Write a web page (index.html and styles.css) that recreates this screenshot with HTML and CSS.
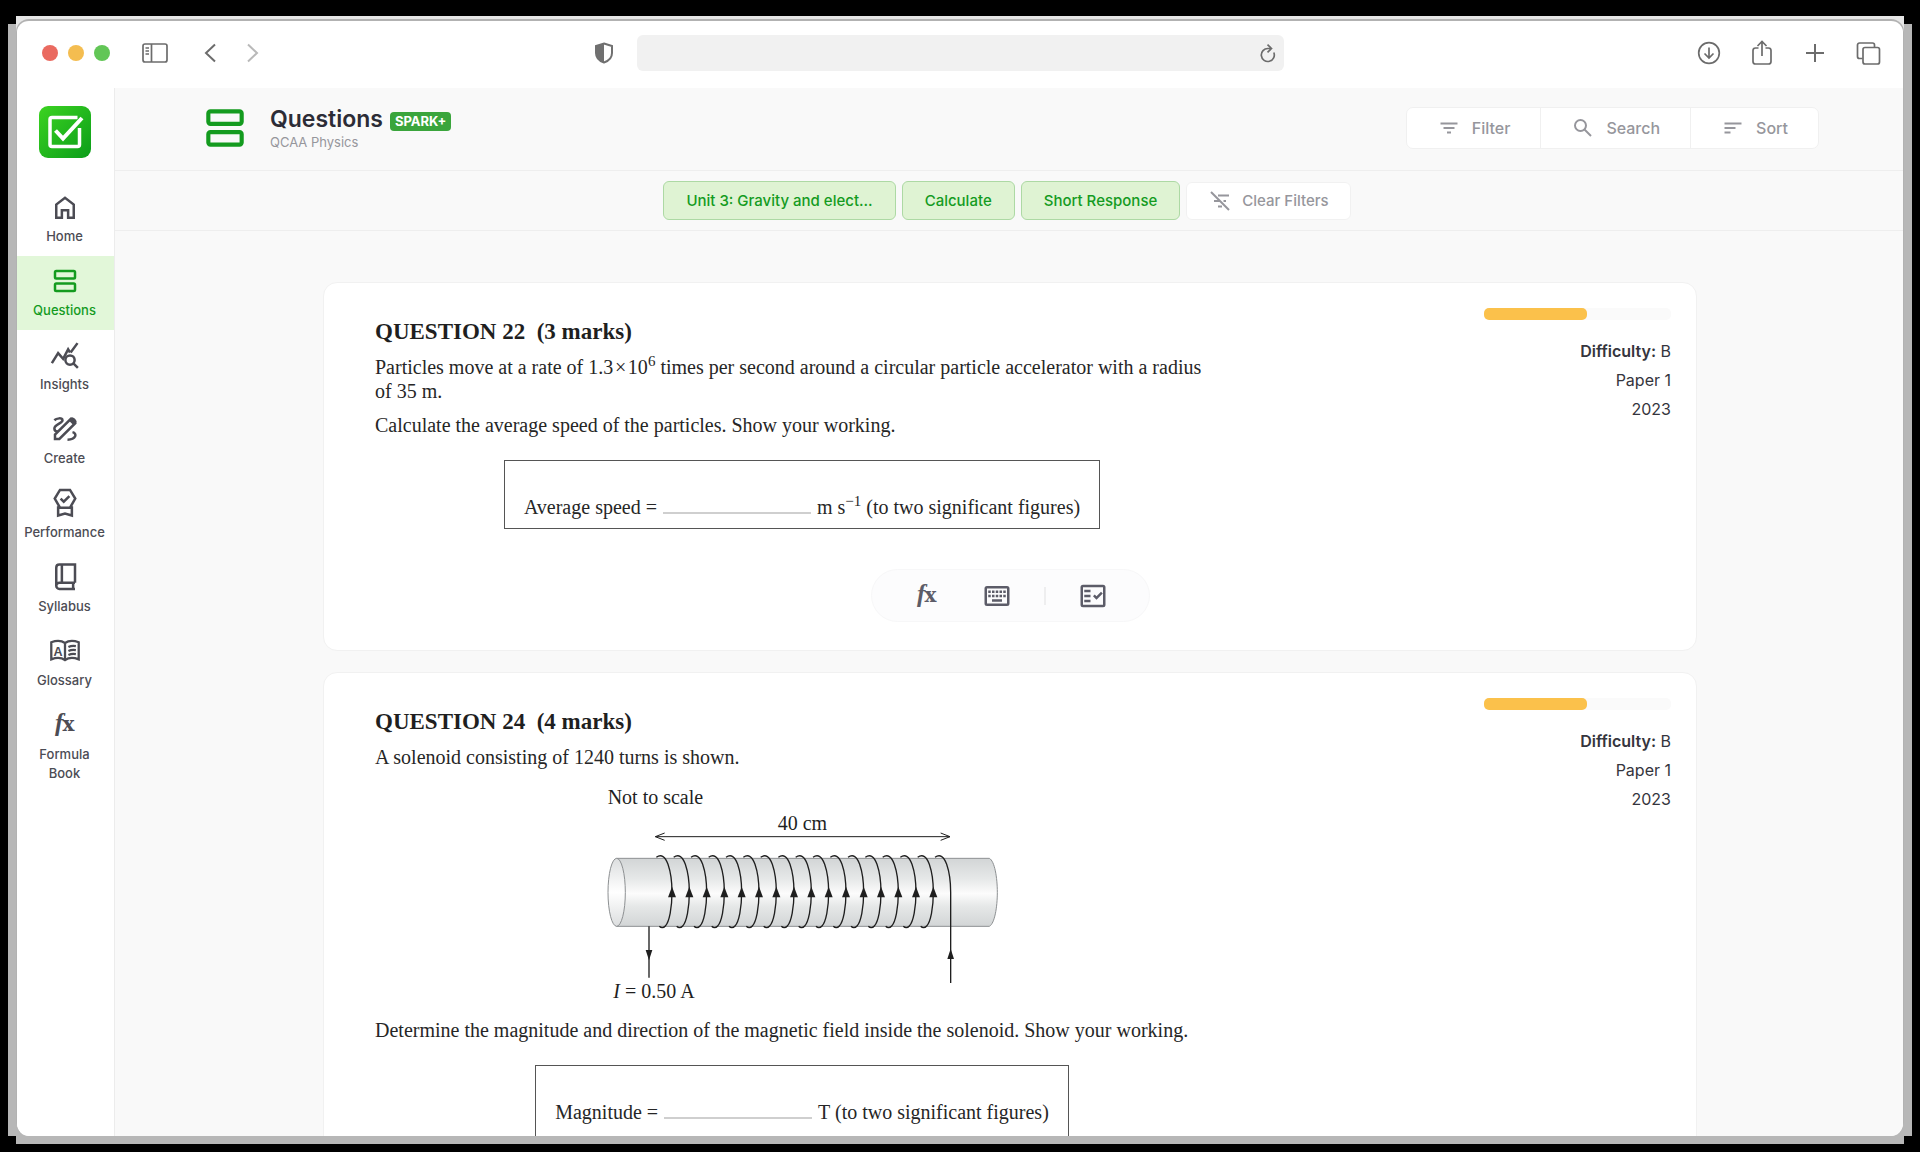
FILE: index.html
```html
<!DOCTYPE html>
<html lang="en">
<head>
<meta charset="utf-8">
<meta name="viewport" content="width=device-width, initial-scale=1">
<title>Questions</title>
<link rel="stylesheet" href="styles.css">
</head>
<body>
<svg class="defs" aria-hidden="true">
  <defs>
    <symbol id="i-rows" viewBox="0 0 24 24"><rect x="4" y="4" width="16" height="6" rx="1" fill="none" stroke="currentColor" stroke-width="2"/><rect x="4" y="14" width="16" height="6" rx="1" fill="none" stroke="currentColor" stroke-width="2"/></symbol>
    <symbol id="i-fx" viewBox="0 0 24 24"><text x="4" y="17" class="fx-f">f</text><text x="10" y="17" class="fx-x">x</text></symbol>
    <symbol id="i-keyboard" viewBox="0 0 24 24"><path fill="currentColor" fill-rule="evenodd" d="M4 4h16a2 2 0 0 1 2 2v12a2 2 0 0 1-2 2H4a2 2 0 0 1-2-2V6a2 2 0 0 1 2-2Zm0 2v12h16V6ZM8 14.500h8v2H8ZM5 7.500h2v2H5Zm3 0h2v2H8Zm3 0h2v2h-2Zm3 0h2v2h-2Zm3 0h2v2h-2ZM5 11h2v2H5Zm3 0h2v2H8Zm3 0h2v2h-2Zm3 0h2v2h-2Zm3 0h2v2h-2Z"/></symbol>
    <symbol id="i-checklist" viewBox="0 0 24 24"><path fill="currentColor" fill-rule="evenodd" d="M4 3h16a2 2 0 0 1 2 2v14a2 2 0 0 1-2 2H4a2 2 0 0 1-2-2V5a2 2 0 0 1 2-2Zm0 2v14h16V5ZM5 7h5v2H5Zm0 4h5v2H5Zm0 4h5v2H5Zm9.800 0L19.800 10l-1.400-1.400-3.600 3.600-1.400-1.400L12 12.200Z"/></symbol>
  </defs>
</svg>
<div class="window">
  <div class="toolbar">
    <div class="toolbar-left">
      <span class="lights"><i class="light red"></i><i class="light amber"></i><i class="light green"></i></span>
      <button class="tool" aria-label="Show sidebar"><svg width="28" height="24" viewBox="0 0 28 24" class="line"><rect x="2" y="3" width="24" height="18" rx="2"/><path d="M10.500 3v18M4.500 7h3.500M4.500 10h3.500M4.500 13h3.500"/></svg></button>
      <button class="tool back" aria-label="Back"><svg width="16" height="24" viewBox="0 0 16 24" class="line thick"><path d="M13 3.500 4 12l9 8.500"/></svg></button>
      <button class="tool forward" aria-label="Forward"><svg width="16" height="24" viewBox="0 0 16 24" class="line thick"><path d="m4 3.500 9 8.500-9 8.500"/></svg></button>
    </div>
    <div class="toolbar-mid">
      <svg width="20" height="24" viewBox="0 0 20 24"><path d="M10 2.500 18 5v7c0 5-3.500 8-8 9.500C5.500 20 2 17 2 12V5Z" fill="none" stroke="#707070" stroke-width="2"/><path d="M10 2.500V21.500C5.500 20 2 17 2 12V5Z" fill="#707070"/></svg>
      <div class="address">
        <input type="text" aria-label="Address">
        <button class="tool reload" aria-label="Reload"><svg width="18" height="20" viewBox="0 0 18 20" class="line"><path d="M14.800 9.500A6.500 6.500 0 1 1 9 5.500h3M8.500 1.700l4 3.800-4 3.800"/></svg></button>
      </div>
    </div>
    <div class="toolbar-right">
      <button class="tool" aria-label="Downloads"><svg width="26" height="28" viewBox="0 0 26 28" class="line"><circle cx="13" cy="14" r="10.300"/><path d="M13 8.500v10M8.500 14.500l4.500 4.500 4.500-4.500"/></svg></button>
      <button class="tool" aria-label="Share"><svg width="26" height="28" viewBox="0 0 26 28" class="line"><path d="M9.500 9H6.500a2.500 2.500 0 0 0-2.500 2.500v11A2.500 2.500 0 0 0 6.500 25h13a2.500 2.500 0 0 0 2.500-2.500v-11A2.500 2.500 0 0 0 19.500 9h-3M13 17V2.500M8.500 7 13 2.500 17.500 7"/></svg></button>
      <button class="tool" aria-label="New tab"><svg width="26" height="28" viewBox="0 0 26 28" class="line thick"><path d="M13 5v18M4 14h18"/></svg></button>
      <button class="tool" aria-label="Show tabs"><svg width="26" height="28" viewBox="0 0 26 28" class="line"><rect x="8" y="8.500" width="16.500" height="16.500" rx="2"/><path d="M7.500 19.500H4.500a2 2 0 0 1-2-2V6a2 2 0 0 1 2-2h13a2 2 0 0 1 2 2v2"/></svg></button>
    </div>
  </div>
  <div class="app">
    <nav class="sidebar">
      <a class="logo" href="#" aria-label="Home page">
        <svg width="52" height="52" viewBox="0 0 52 52"><defs><linearGradient id="logo-fill" x1="0" y1="0" x2="1" y2="1"><stop offset="0" stop-color="#3cd321"/><stop offset="1" stop-color="#0b9d1a"/></linearGradient></defs><rect width="52" height="52" rx="9" fill="url(#logo-fill)"/><path d="M38.500 11.500H13a2 2 0 0 0-2 2V38.500a2 2 0 0 0 2 2H38.500a2 2 0 0 0 2-2V22" fill="none" stroke="#fff" stroke-width="3.500"/><path d="m16.500 24.500 7.500 8L43 12" fill="none" stroke="#fff" stroke-width="4"/></svg>
      </a>
      <a class="nav-item" href="#"><svg class="nav-icon" viewBox="0 0 24 24"><path class="ln" d="M5 20.500V10L12 4.700l7 5.300V20.500h-4.500v-6h-5v6Z"/></svg>Home</a>
      <a class="nav-item active" href="#" aria-current="page"><svg class="nav-icon"><use href="#i-rows"/></svg>Questions</a>
      <a class="nav-item" href="#"><svg class="nav-icon" viewBox="0 0 24 24"><path class="ln" d="m1.500 18.500 5-8 4 4.500 4-7.500 1.500 2.500M16.500 10 22 2.500"/><circle class="ln" cx="16" cy="16" r="3.700"/><path class="ln" d="m18.700 18.700 3.600 3.600"/></svg>Insights</a>
      <a class="nav-item" href="#"><svg class="nav-icon" viewBox="0 0 24 24"><path class="ln" d="M4 20v-3.500L16.500 4 20 7.500 7.500 20ZM3.500 5C5 3.500 10 2.500 10 5S3.500 8.500 3.500 11.500c0 2 1.500 2.500 3 2.500M18 14.500c4 1 3 6-4 6"/><path fill="currentColor" d="m14.800 5 2-2c1.500-1.500 5.700 2.700 4.200 4.200l-2 2Z"/></svg>Create</a>
      <a class="nav-item" href="#"><svg class="nav-icon" viewBox="0 0 24 24"><path class="ln" d="M8 1.500h8l4.200 7-4.200 7.200H8L3.800 8.500ZM6.500 14.500v7.500l5.500-1.500 5.500 1.500v-7.500M8.500 8.500l2.500 2.500 4.500-4.500"/></svg>Performance</a>
      <a class="nav-item" href="#"><svg class="nav-icon" viewBox="0 0 24 24"><path class="ln" d="M20 16.500V2H7.500C5.500 2 5 3 5 4.500v14.500M9.500 2v14.500M20 16.500H7.500a2.500 2.500 0 0 0 0 5H20M18.500 16.500v5"/></svg>Syllabus</a>
      <a class="nav-item" href="#"><svg class="nav-icon wide" viewBox="0 0 28 24"><path class="ln" d="M14 5C11 2.800 6 2.800 2 4.300v15c4-1.500 9-1.500 12 .700 3-2.200 8-2.200 12-.700v-15C22 2.800 17 2.800 14 5Zm0 0v15M17 8.500c2-1 4-1.200 6.500-.8M17 12c2-1 4-1.200 6.500-.8M17 15.500c2-1 4-1.200 6.500-.8"/><text class="glyph-a" x="4" y="16">A</text></svg>Glossary</a>
      <a class="nav-item" href="#"><svg class="nav-icon"><use href="#i-fx"/></svg>Formula<br>Book</a>
    </nav>
    <main class="main">
      <header class="header">
        <svg class="header-icon" width="50" height="50"><use href="#i-rows"/></svg>
        <div class="titles">
          <div class="title-row"><h1>Questions</h1><span class="badge">SPARK+</span></div>
          <p class="subtitle">QCAA Physics</p>
        </div>
        <div class="actions">
          <button><svg width="24" height="24" viewBox="0 0 24 24"><path class="ln" d="M3.500 7.500h17M6.500 12h11M10 16.500h4"/></svg>Filter</button>
          <button><svg width="24" height="24" viewBox="0 0 24 24"><circle class="ln" cx="9.500" cy="9.500" r="5.500"/><path class="ln" d="m13.500 13.500 6.500 6.500"/></svg>Search</button>
          <button><svg width="24" height="24" viewBox="0 0 24 24"><path class="ln" d="M3.500 7.500h17M3.500 12h11M3.500 16.500h6"/></svg>Sort</button>
        </div>
      </header>
      <div class="filters">
        <button class="chip">Unit 3: Gravity and elect...</button>
        <button class="chip">Calculate</button>
        <button class="chip">Short Response</button>
        <button class="clear"><svg width="24" height="24" viewBox="0 0 24 24"><path class="ln" d="m3 3 18 18M10 6.500h11M6 12h6M15.500 12h2.500M10 17.500h4"/></svg>Clear Filters</button>
      </div>
      <div class="list">
        <article class="card">
          <div class="card-body">
            <div class="question">
              <h2>QUESTION 22&nbsp; (3 marks)</h2>
              <p>Particles move at a rate of 1.3&hairsp;×&hairsp;10<sup>6</sup> times per second around a circular particle accelerator with a radius<br>of 35 m.</p>
              <p>Calculate the average speed of the particles. Show your working.</p>
              <div class="answer"><label for="speed">Average speed =</label><input id="speed" type="text"><span>m s<sup>−1</sup> (to two significant figures)</span></div>
            </div>
            <aside class="meta">
              <div class="meter"><span style="width:55%"></span></div>
              <p><strong>Difficulty:</strong> B</p><p>Paper 1</p><p>2023</p>
            </aside>
          </div>
          <div class="tools">
            <button class="formula" aria-label="Formula book"><svg width="30" height="30"><use href="#i-fx"/></svg></button>
            <button aria-label="Keyboard"><svg width="30" height="30"><use href="#i-keyboard"/></svg></button>
            <i class="divider"></i>
            <button aria-label="Solution"><svg width="30" height="30"><use href="#i-checklist"/></svg></button>
          </div>
        </article>
        <article class="card">
          <div class="card-body">
            <div class="question">
              <h2>QUESTION 24&nbsp; (4 marks)</h2>
              <p>A solenoid consisting of 1240 turns is shown.</p>
              <svg class="figure" viewBox="6 0 1320 720" role="img" aria-label="Solenoid, 40 cm long, carrying 0.50 A">
                <defs>
                  <linearGradient id="tube" x1="0" y1="0" x2="0" y2="1"><stop offset="0" stop-color="#d2d5d6"/><stop offset=".3" stop-color="#e6e8e8"/><stop offset=".52" stop-color="#fcfcfc"/><stop offset=".7" stop-color="#e6e8e8"/><stop offset="1" stop-color="#d2d5d6"/></linearGradient>
                  <linearGradient id="mouth" x1="0" y1="0" x2="0" y2="1"><stop offset="0" stop-color="#dcdedf"/><stop offset=".5" stop-color="#ffffff"/><stop offset="1" stop-color="#dcdedf"/></linearGradient>
                  <g id="turn"><path class="wire" d="M-47 259C-32 248 -20 257 -12 280C-3 306 0 335 0 364C0 410 -8 452 -20 465C-26 472 -33 471 -38 466"/><path d="M0 347 12 379H-12Z"/></g>
                </defs>
                <text x="83" y="100">Not to scale</text>
                <text x="593" y="178">40 cm</text>
                <path class="wire thin" d="M226 197H1110M254 186 226 197 254 208M1082 186 1110 197 1082 208"/>
                <path d="M110 262H1228C1244 270 1252 320 1252 364S1244 458 1228 466H110Z" fill="url(#tube)" stroke="#8d9092" stroke-width="3"/>
                <ellipse cx="110" cy="364" rx="26" ry="102" fill="url(#mouth)" stroke="#8d9092" stroke-width="3"/>
                <use href="#turn" x="276"/><use href="#turn" x="328"/><use href="#turn" x="380"/><use href="#turn" x="433"/>
                <use href="#turn" x="485"/><use href="#turn" x="537"/><use href="#turn" x="589"/><use href="#turn" x="642"/>
                <use href="#turn" x="694"/><use href="#turn" x="746"/><use href="#turn" x="798"/><use href="#turn" x="851"/>
                <use href="#turn" x="903"/><use href="#turn" x="955"/><use href="#turn" x="1008"/><use href="#turn" x="1060"/>
                <path class="wire" d="M1065 259C1080 248 1092 257 1100 280C1109 306 1112 335 1112 364V636M207 466V620"/>
                <path d="M1112 533 1122 564H1102ZM207 568 217 537H197Z"/>
                <text x="100" y="682"><tspan font-style="italic">I</tspan> = 0.50 A</text>
              </svg>
              <p>Determine the magnitude and direction of the magnetic field inside the solenoid. Show your working.</p>
              <div class="answer tall"><label for="magnitude">Magnitude =</label><input id="magnitude" type="text"><span>T (to two significant figures)</span></div>
            </div>
            <aside class="meta">
              <div class="meter"><span style="width:55%"></span></div>
              <p><strong>Difficulty:</strong> B</p><p>Paper 1</p><p>2023</p>
            </aside>
          </div>
        </article>
      </div>
    </main>
  </div>
</div>
</body>
</html>
```
FILE: styles.css
```css
* { box-sizing: border-box; margin: 0; padding: 0; }

body {
  height: 100vh;
  padding: 19px 16px 16px;
  overflow: hidden;
  font-family: Inter, "Open Sans", sans-serif;
  color: #35353d;
  background:
    linear-gradient(#e6e6e6, #e6e6e6) 16px 16px / calc(100% - 32px) 16px no-repeat,
    linear-gradient(#b7b7b7, #b7b7b7) 8px 24px / calc(100% - 16px) calc(100% - 40px) no-repeat,
    linear-gradient(#b7b7b7, #b7b7b7) 16px 24px / calc(100% - 32px) calc(100% - 32px) no-repeat,
    #000;
}

button { font: inherit; color: inherit; background: none; border: 0; }
a { color: inherit; text-decoration: none; }
svg { display: block; }
.defs { position: absolute; width: 0; height: 0; }

.ln { fill: none; stroke: currentColor; stroke-width: 2; }

.window {
  height: 100%;
  display: flex;
  flex-direction: column;
  overflow: hidden;
  background: #fff;
  border: 1px solid #b2b2b2;
  border-top-width: 2px;
  border-bottom: 0;
  border-radius: 13px;
}

/* Browser toolbar */
.toolbar {
  flex: none;
  height: 67px;
  padding-bottom: 3px;
  display: grid;
  grid-template-columns: 577fr 690fr 619fr;
  align-items: center;
}
.toolbar-left { display: flex; align-items: center; padding-left: 25px; }
.lights { display: flex; gap: 10px; margin-right: 31px; }
.light { width: 16px; height: 16px; border-radius: 50%; }
.red { background: #ea6a60; }
.amber { background: #f4bd50; }
.green { background: #62c656; }
.tool { display: flex; color: #6c6c6c; }
.back { margin-left: 33px; }
.forward { margin-left: 26px; color: #b9b9b9; }
.line { fill: none; stroke: currentColor; stroke-width: 1.7; }
.thick { stroke-width: 2; }
.toolbar-mid { display: flex; align-items: center; gap: 23px; }
.address {
  flex: 1;
  height: 36px;
  display: flex;
  align-items: center;
  padding-right: 7px;
  background: #f1f1f1;
  border-radius: 6px;
}
.address input { flex: 1; min-width: 0; height: 100%; padding: 0 12px; border: 0; background: none; font: inherit; }
.toolbar-right { display: flex; justify-content: flex-end; gap: 27px; padding-right: 22px; }

/* App shell */
.app { flex: 1; min-height: 0; display: flex; }
.sidebar {
  flex: none;
  width: 98px;
  padding-top: 18px;
  background: #fff;
  border-right: 1px solid #ececec;
  overflow: hidden;
}
.logo { display: flex; justify-content: center; height: 76px; padding-right: 2px; }
.nav-item {
  display: flex;
  flex-direction: column;
  align-items: center;
  min-height: 74px;
  padding: 10px 2px 0 0;
  font-size: 13px;
  font-weight: 500;
  line-height: 19px;
  text-align: center;
  color: #4c4c54;
}
.nav-item.active { color: #149b1f; background: #e2f7d9; }
.nav-icon { width: 30px; height: 30px; margin-bottom: 5px; }
.nav-icon.wide { width: 32px; }
.glyph-a { font: 700 11px "Liberation Sans", sans-serif; fill: currentColor; }
.fx-f { font: italic 700 20px "Liberation Serif", serif; fill: currentColor; }
.fx-x { font: 700 16px "DejaVu Serif", serif; fill: currentColor; }

.main { flex: 1; min-width: 0; display: flex; flex-direction: column; background: #f9f9f9; overflow: hidden; }
.header {
  flex: none;
  height: 83px;
  display: flex;
  align-items: center;
  padding: 0 84px 2px 85px;
  border-bottom: 1px solid #eeeeee;
}
.header-icon { color: #149b1f; }
.titles { margin-left: 20px; }
.title-row { display: flex; align-items: center; gap: 7px; }
h1 { font-size: 23px; font-weight: 600; line-height: 28px; color: #2c2c36; }
.badge {
  height: 19px;
  padding: 0 5px;
  margin-top: 4px;
  font-size: 13px;
  font-weight: 700;
  line-height: 19px;
  color: #fff;
  background: #3aa53c;
  border-radius: 4px;
}
.subtitle { font-size: 13px; line-height: 18px; color: #96969c; }
.actions { display: flex; margin-left: auto; background: #fff; border: 1px solid #f0f0f0; border-radius: 7px; }
.actions button {
  display: flex;
  align-items: center;
  gap: 11px;
  height: 40px;
  padding: 0 30px;
  font-size: 16px;
  font-weight: 500;
  color: #96969c;
}
.actions button + button { border-left: 1px solid #f0f0f0; }

.filters {
  flex: none;
  height: 60px;
  display: flex;
  align-items: center;
  justify-content: center;
  gap: 6px;
  padding-right: 4px;
  border-bottom: 1px solid #eeeeee;
  font-size: 15px;
  font-weight: 500;
}
.chip { height: 39px; padding: 0 22px; color: #149b1f; background: #dff3d3; border: 1px solid #add9a4; border-radius: 6px; }
.clear {
  display: flex;
  align-items: center;
  gap: 10px;
  height: 38px;
  padding: 0 21px;
  color: #96969c;
  background: #fff;
  border: 1px solid #f1f1f1;
  border-radius: 6px;
}

/* Question cards */
.list { flex: 1; min-height: 0; overflow: hidden; padding: 51px 206px 0 208px; }
.card {
  margin-bottom: 21px;
  padding: 25px 0 28px;
  background: #fff;
  border: 1px solid #f1f1f1;
  border-radius: 14px;
}
.card-body { display: flex; justify-content: space-between; padding: 0 25px 0 51px; }
.question {
  width: 854px;
  padding-top: 10px;
  font: 20px/24px "Liberation Serif", "Times New Roman", serif;
  color: #262626;
}
.question h2 { margin-bottom: 9px; font-size: 23px; line-height: 28px; color: #1f1f1f; }
.question p { margin-bottom: 10px; }
sup { font-size: 15px; line-height: 0; }
.answer {
  width: fit-content;
  margin: 23px auto 0;
  padding: 34px 19px 9px;
  display: flex;
  gap: 6px;
  border: 1px solid #555;
}
.answer.tall { padding-bottom: 20px; }
.answer input { width: 148px; height: 19px; border: 0; border-bottom: 2px solid #cfcfcf; background: none; font: inherit; }
.figure { display: block; width: 440px; height: 240px; margin: -8px auto 7px; font-size: 60px; fill: #1f1f1f; }
.wire { fill: none; stroke: #1f1f1f; stroke-width: 4; }
.thin { stroke-width: 3; }

.meta { width: 187px; font-size: 16px; line-height: 29px; text-align: right; }
.meta strong { font-weight: 600; }
.meter { height: 12px; margin-bottom: 17px; border-radius: 5px; background: #fafafa; }
.meter span { display: block; height: 100%; border-radius: 5px; background: #fbc14b; }

.tools {
  width: 279px;
  height: 53px;
  margin: 40px auto 0;
  display: flex;
  align-items: center;
  justify-content: center;
  gap: 32px;
  color: #5c5c68;
  background: #fcfcfd;
  border: 1px solid #f7f7f8;
  border-radius: 27px;
}
.formula { margin-right: 8px; }
.divider { width: 2px; height: 18px; background: #eeeeef; }
```
